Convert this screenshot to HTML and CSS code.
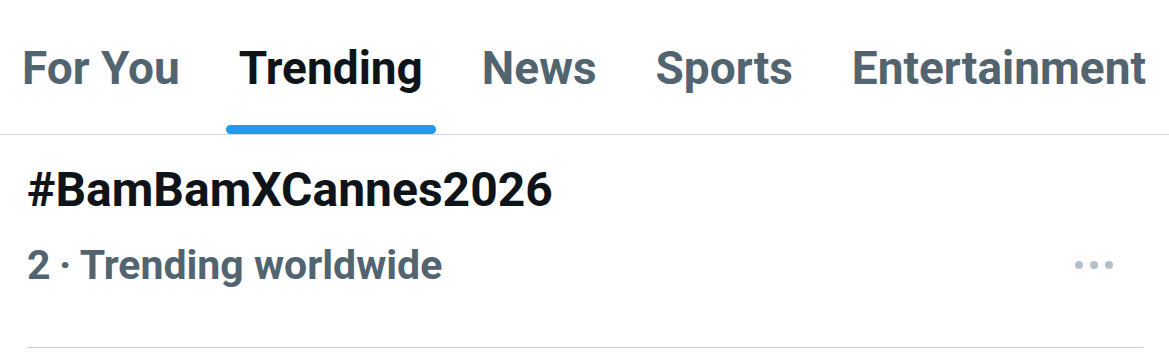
FILE: index.html
```html
<!DOCTYPE html>
<html lang="en">
<head>
  <meta charset="UTF-8">
  <meta name="viewport" content="width=device-width, initial-scale=1.0">
  <title>Explore</title>
  <link rel="stylesheet" href="styles.css">
</head>
<body>
  <div class="tabs">
    <a class="tab">For You</a>
    <a class="tab active">Trending</a>
    <a class="tab">News</a>
    <a class="tab">Sports</a>
    <a class="tab">Entertainment</a>
  </div>

  <div class="trend">
    <div class="trend-text">
      <div class="trend-name">#BamBamXCannes2026</div>
      <div class="trend-meta">2&thinsp;·&thinsp;Trending worldwide</div>
    </div>
    <button class="more" aria-label="More">
      <svg width="44" height="12" viewBox="0 0 44 12">
        <circle cx="6" cy="6" r="4"></circle>
        <circle cx="21" cy="6" r="4"></circle>
        <circle cx="36" cy="6" r="4"></circle>
      </svg>
    </button>
  </div>
</body>
</html>
```

FILE: styles.css
```css
html, body {
  margin: 0;
  padding: 0;
  background: #fff;
  font-family: Roboto, "Liberation Sans", sans-serif;
}

.tabs {
  display: flex;
  justify-content: space-between;
  height: 135px;
  box-sizing: border-box;
  padding: 0 23px 0 22px;
  border-bottom: 1px solid #cfd9de;
}

.tab {
  position: relative;
  padding-top: 42px;
  font-size: 46px;
  line-height: 52px;
  font-weight: 700;
  color: #536471;
  cursor: pointer;
}

.tab.active {
  color: #0f1419;
}

.tab.active::after {
  content: "";
  position: absolute;
  left: -13px;
  right: -13px;
  bottom: 0;
  height: 9px;
  border-radius: 5px;
  background: #1d9bf0;
}

.trend {
  display: flex;
  justify-content: space-between;
  height: 213px;
  box-sizing: border-box;
  margin: 0 26px 0 27px;
  border-bottom: 1px solid #c9cdd1;
}

.trend-name {
  padding-top: 29px;
  font-size: 48px;
  line-height: 52px;
  font-weight: 700;
  color: #0f1419;
}

.trend-meta {
  padding-top: 24px;
  font-size: 41px;
  line-height: 50px;
  font-weight: 700;
  color: #536471;
}

.more {
  align-self: flex-start;
  margin: 124px 26px 0 0;
  padding: 0;
  border: none;
  background: none;
  fill: #b4bfc8;
  cursor: pointer;
}

.more svg {
  display: block;
}
```
